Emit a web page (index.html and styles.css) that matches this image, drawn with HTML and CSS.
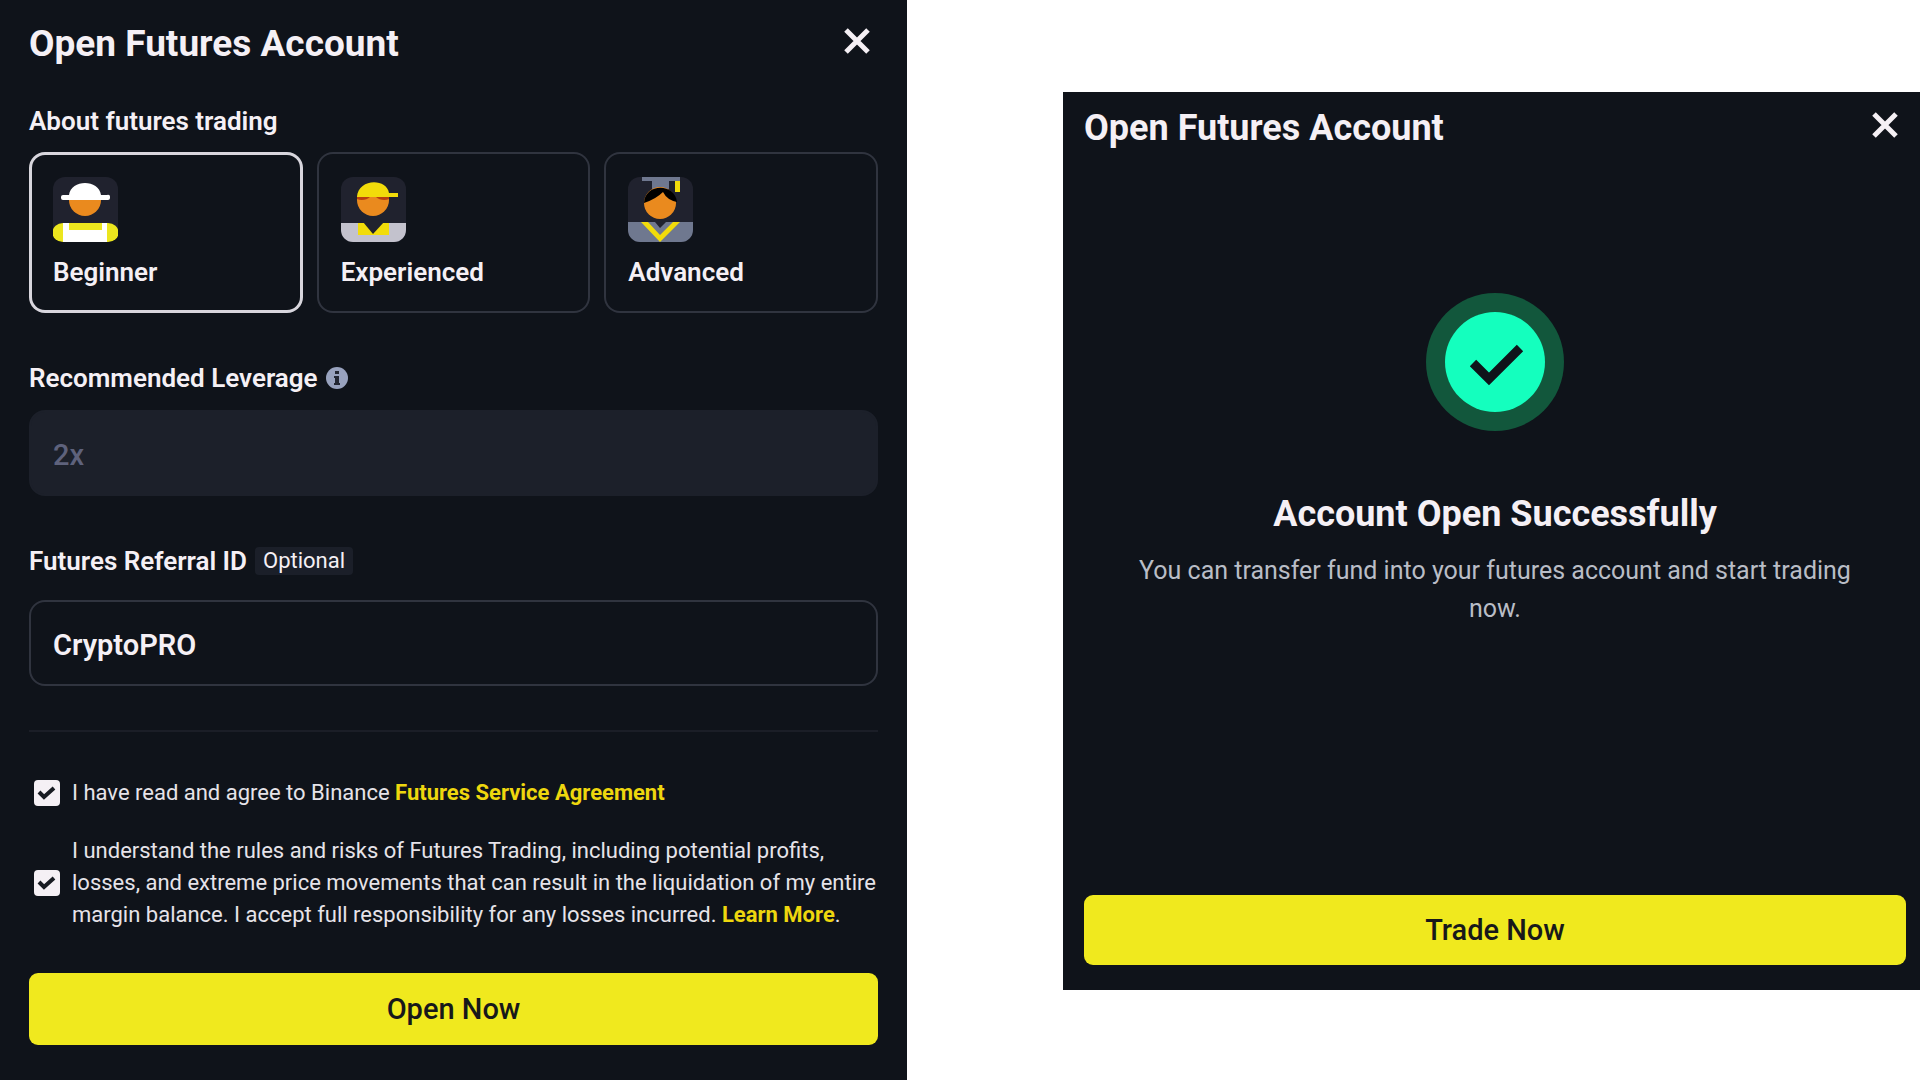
FILE: index.html
```html
<!DOCTYPE html>
<html lang="en">
<head>
  <meta charset="UTF-8">
  <meta name="viewport" content="width=device-width, initial-scale=1.0">
  <title>Open Futures Account</title>
  <link rel="stylesheet" href="styles.css">
</head>
<body>
  <form class="panel open-panel">
    <header class="panel-header">
      <h2>Open Futures Account</h2>
      <button type="button" class="close" aria-label="Close">
        <svg viewBox="0 0 26 26"><path d="M2 2L24 24M24 2L2 24"/></svg>
      </button>
    </header>

    <fieldset class="levels">
      <legend class="label">About futures trading</legend>
      <div class="level-list">
        <label class="level">
          <input type="radio" name="level" value="beginner" checked>
          <svg class="avatar" viewBox="0 0 65 65">
            <rect width="65" height="65" rx="12" fill="#20222e"/>
            <circle cx="32" cy="23" r="16" fill="#ea8a1e"/>
            <path d="M16 18C18 2 46 2 48 18h6a2 2 0 0 1 3 2v1a2 2 0 0 1-2 2H10a2 2 0 0 1-2-2v-1a2 2 0 0 1 2-2z" fill="#fff"/>
            <path d="M10 46H55a10 9 0 0 1 0 19H10a10 9 0 0 1 0-19z" fill="#ece61e"/>
            <path d="M10 46h6v7h33v-7h5v19H10z" fill="#fff"/>
          </svg>
          <span>Beginner</span>
        </label>
        <label class="level">
          <input type="radio" name="level" value="experienced">
          <svg class="avatar" viewBox="0 0 65 65">
            <rect width="65" height="65" rx="12" fill="#20222e"/>
            <circle cx="32" cy="23" r="16" fill="#ea8a1e"/>
            <path d="M16 20h32v2c-4 2-10 1-13-2h-6c-3 3-9 4-13 2z" fill="#b8400f"/>
            <path d="M16 20C17 1 46 1 48 16h9v4z" fill="#f2dc0a"/>
            <path d="M0 46H65V53a12 12 0 0 1-12 12H12a12 12 0 0 1-12-12z" fill="#c3c2cd"/>
            <path d="M17 46H48V58H17z" fill="#f2dc0a"/>
            <path d="M22 45H43L32 57z" fill="#20222e"/>
          </svg>
          <span>Experienced</span>
        </label>
        <label class="level">
          <input type="radio" name="level" value="advanced">
          <svg class="avatar" viewBox="0 0 65 65">
            <rect width="65" height="65" rx="12" fill="#20222e"/>
            <path d="M14 0H52V4H41V12H24V4H14z" fill="#6f788f"/>
            <path d="M47 4H52V15H47z" fill="#f2dc0a"/>
            <circle cx="32" cy="26" r="16" fill="#ea8a1e"/>
            <path d="M16 26C17 6 47 6 49 25Q39 23 35 15Q28 22 16 26z" fill="#000"/>
            <path d="M0 45H27L32 51L38 45H65V53a12 12 0 0 1-12 12H12a12 12 0 0 1-12-12z" fill="#6f788f"/>
            <path d="M13 45H20L32 58L45 45H52L32 65z" fill="#f2dc0a"/>
          </svg>
          <span>Advanced</span>
        </label>
      </div>
    </fieldset>

    <div class="field">
      <div class="field-head">
        <label class="label" for="leverage">Recommended Leverage</label>
        <svg class="info" viewBox="0 0 22 22">
          <circle cx="11" cy="11" r="11" fill="#98a2be"/>
          <path d="M9 4h4v3H9zM8 9h5v7h1v2H8v-2h1v-5H8z" fill="#232733"/>
        </svg>
      </div>
      <input class="text-input" id="leverage" type="text" value="2x" disabled>
    </div>

    <div class="field referral">
      <div class="field-head">
        <label class="label" for="referral">Futures Referral ID</label>
        <span class="tag">Optional</span>
      </div>
      <input class="text-input" id="referral" type="text" value="CryptoPRO">
    </div>

    <hr>

    <div class="check">
      <input type="checkbox" id="agree" checked>
      <label for="agree">I have read and agree to Binance <a href="#">Futures Service Agreement</a></label>
    </div>
    <div class="check">
      <input type="checkbox" id="risks" checked>
      <label for="risks">I understand the rules and risks of Futures Trading, including potential profits, losses, and extreme price movements that can result in the liquidation of my entire margin balance. I accept full responsibility for any losses incurred. <a href="#">Learn More</a>.</label>
    </div>

    <button type="button" class="submit">Open Now</button>
  </form>

  <section class="panel success-panel">
    <header class="panel-header">
      <h2>Open Futures Account</h2>
      <button type="button" class="close" aria-label="Close">
        <svg viewBox="0 0 26 26"><path d="M2 2L24 24M24 2L2 24"/></svg>
      </button>
    </header>
    <div class="success">
      <svg class="success-icon" viewBox="0 0 138 138">
        <circle cx="69" cy="69" r="69" fill="#12573c"/>
        <circle cx="69" cy="69" r="50" fill="#14ffbe"/>
        <path d="M47 70L63 86L94 55" fill="none" stroke="#0f131a" stroke-width="9"/>
      </svg>
      <h2>Account Open Successfully</h2>
      <p>You can transfer fund into your futures account and start trading now.</p>
    </div>
    <button type="button" class="submit">Trade Now</button>
  </section>
</body>
</html>
```

FILE: styles.css
```css
* {
  margin: 0;
  padding: 0;
  box-sizing: border-box;
  font-family: Roboto, "Liberation Sans", sans-serif;
}

body {
  display: grid;
  grid-template-columns: 907fr 857fr;
  column-gap: 156px;
  min-height: 100vh;
  background-color: white;
}

.panel {
  display: flex;
  flex-direction: column;
  background-color: #0f131a;
  color: #f5f0f5;
}

.open-panel {
  padding: 20px 29px 36px;
}

.success-panel {
  align-self: center;
  padding: 12px 14px 25px 21px;
}

.panel-header {
  display: flex;
  align-items: flex-start;
  justify-content: space-between;
}

h2 {
  font-size: 36px;
  font-weight: 700;
  line-height: 48px;
}

.open-panel h2 {
  font-size: 37px;
}

.close {
  width: 42px;
  height: 42px;
  padding: 8px;
  border: none;
  background: none;
  cursor: pointer;
}

.close svg {
  display: block;
  width: 26px;
  height: 26px;
  stroke: #f5f0f5;
  stroke-width: 5;
}

.label {
  font-size: 26px;
  font-weight: 600;
  line-height: 32px;
}

.levels {
  margin-top: 37px;
  border: none;
}

.level-list {
  display: grid;
  grid-template-columns: repeat(3, 1fr);
  gap: 14px;
  margin-top: 15px;
}

.level {
  display: flex;
  flex-direction: column;
  gap: 14px;
  padding: 25px 24px;
  border-radius: 16px;
  box-shadow: inset 0 0 0 2px #30343f;
  font-size: 26px;
  font-weight: 600;
  line-height: 32px;
  cursor: pointer;
}

.level:has(input:checked) {
  box-shadow: inset 0 0 0 3px #d8d6dd;
}

.level input {
  position: absolute;
  opacity: 0;
}

.avatar {
  width: 65px;
  height: 65px;
}

.field {
  display: flex;
  flex-direction: column;
  gap: 16px;
  margin-top: 49px;
}

.referral {
  gap: 23px;
}

.field-head {
  display: flex;
  align-items: center;
  gap: 8px;
}

.info {
  width: 22px;
  height: 22px;
}

.tag {
  padding: 0 8px;
  border-radius: 4px;
  background-color: #1b1f29;
  font-size: 22px;
  line-height: 28px;
}

.text-input {
  width: 100%;
  height: 86px;
  padding: 4px 22px 0;
  border: 2px solid #30343f;
  border-radius: 16px;
  background-color: transparent;
  color: #f5f0f5;
  font-size: 29px;
  font-weight: 600;
}

.text-input:disabled {
  border-color: #1c202a;
  background-color: #1c202a;
  color: #5e627c;
  font-weight: 500;
}

hr {
  height: 2px;
  margin: 44px 0 45px;
  border: none;
  background-color: #1b1e27;
}

.check {
  display: flex;
  align-items: center;
  gap: 12px;
  padding-left: 5px;
  color: #e6e3e9;
  font-size: 22px;
  line-height: 32px;
}

.check + .check {
  margin-top: 26px;
}

.check input {
  flex: none;
  width: 26px;
  height: 26px;
  border-radius: 4px;
  background: #f5f0f5 url("data:image/svg+xml,%3Csvg xmlns='http://www.w3.org/2000/svg' viewBox='0 0 26 26'%3E%3Cpath d='M5 12l5 5L20 8' fill='none' stroke='%23181b22' stroke-width='4'/%3E%3C/svg%3E");
  appearance: none;
}

.check a {
  color: #eed70e;
  font-weight: 700;
  text-decoration: none;
}

.submit {
  height: 72px;
  border: none;
  border-radius: 9px;
  background-color: #f0e91e;
  color: #17181a;
  font-size: 29px;
  font-weight: 500;
  cursor: pointer;
}

.open-panel .submit {
  margin-top: 42px;
}

.success-panel .submit {
  height: 70px;
}

.success {
  display: flex;
  flex-direction: column;
  align-items: center;
  padding: 141px 50px 267px;
  text-align: center;
}

.success-icon {
  width: 138px;
  height: 138px;
  margin-bottom: 59px;
}

.success p {
  margin-top: 14px;
  color: #b9bdc6;
  font-size: 25px;
  line-height: 38px;
}
```
